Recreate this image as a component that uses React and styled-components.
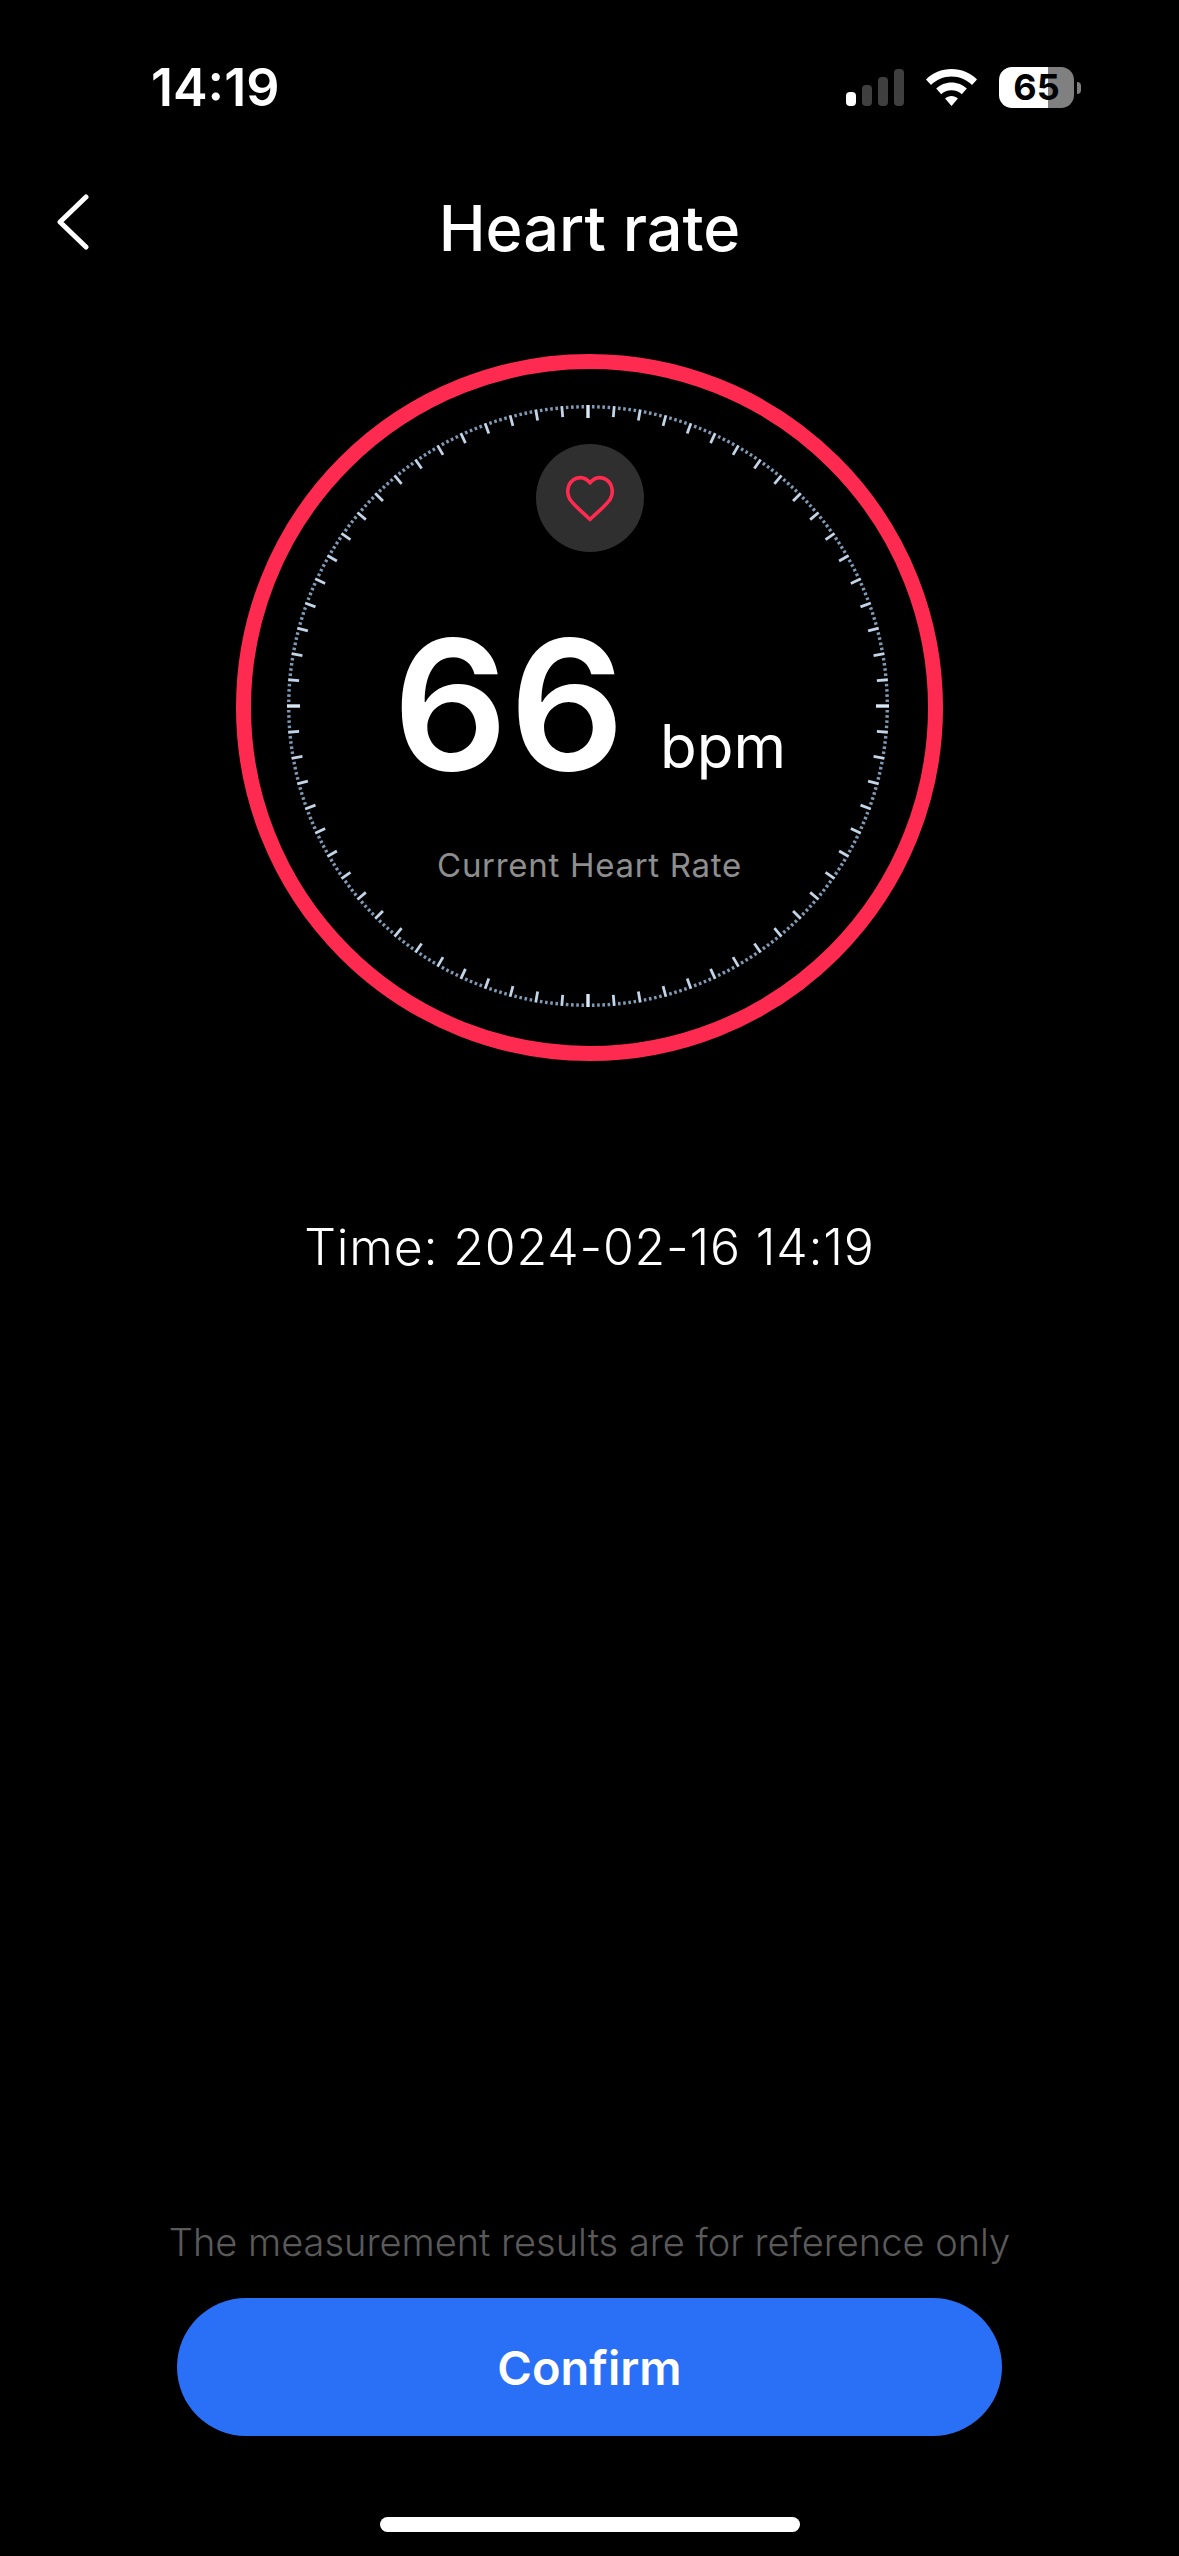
import styled, { createGlobalStyle } from "styled-components";

const ticks = Array.from({ length: 360 }, (_, i) => i);

function tickShape(deg) {
    if (deg % 90 === 0) return { len: 13, width: 3.4, color: "#dbe8f5" };
    if (deg % 5 === 0) return { len: 11, width: 2.8, color: "#c2d5e8" };
    return { len: 3.4, width: 2.6, color: "#7f9ab5" };
}

function Dial() {
    return (
        <DialSvg viewBox="-302 -302 604 604">
            {ticks.map((deg) => {
                const { len, width, color } = tickShape(deg);
                return (
                    <line
                        key={deg}
                        x1="0"
                        y1={-301}
                        x2="0"
                        y2={-301 + len}
                        stroke={color}
                        strokeWidth={width}
                        transform={`rotate(${deg})`}
                    />
                );
            })}
        </DialSvg>
    );
}

function App() {
    return (
        <Screen>
            <GlobalStyle />
            <StatusBar>
                <Clock>14:19</Clock>
                <StatusIcons>
                    <Signal>
                        <Bar $h={14} $on />
                        <Bar $h={21} />
                        <Bar $h={29} />
                        <Bar $h={37} />
                    </Signal>
                    <svg width="51" height="37" viewBox="0 0 51 37">
                        <path
                            d="M25.5 0C35.5 0 44.3 3.9 51 10.4L46 16C40.6 10.8 33.4 7.6 25.5 7.6S10.4 10.8 5 16L0 10.4C6.7 3.9 15.5 0 25.5 0Z"
                            fill="#fff"
                        />
                        <path
                            d="M25.5 13.5C31.4 13.5 36.8 15.8 40.8 19.6L35.8 25.2C33.1 22.7 29.5 21.2 25.5 21.2S17.9 22.7 15.2 25.2L10.2 19.6C14.2 15.8 19.6 13.5 25.5 13.5Z"
                            fill="#fff"
                        />
                        <path
                            d="M25.5 27C28 27 30.2 27.9 31.9 29.5L25.5 37L19.1 29.5C20.8 27.9 23 27 25.5 27Z"
                            fill="#fff"
                        />
                    </svg>
                    <Battery>
                        <BatteryCell>
                            <BatteryLevel>65</BatteryLevel>
                        </BatteryCell>
                        <BatteryCap />
                    </Battery>
                </StatusIcons>
            </StatusBar>

            <NavBar>
                <BackButton>
                    <svg width="34" height="56" viewBox="0 0 34 56">
                        <path
                            d="M30 3L4 28L30 53"
                            fill="none"
                            stroke="#fff"
                            strokeWidth="5"
                            strokeLinecap="round"
                            strokeLinejoin="round"
                        />
                    </svg>
                </BackButton>
                <Title>Heart rate</Title>
                <span />
            </NavBar>

            <Gauge>
                <Dial />
                <HeartBadge>
                    <svg width="52" height="49" viewBox="-1.5 -1.5 52 49">
                        <path
                            d="M24.5 44C18 37.5 9 30.5 4.5 24C0.5 17.5 1.5 6.5 11 2.8C16.5 1 21.5 3.5 24.5 7.5C27.5 3.5 32.5 1 38 2.8C47.5 6.5 48.5 17.5 44.5 24C40 30.5 31 37.5 24.5 44Z"
                            fill="none"
                            stroke="#fe2a50"
                            strokeWidth="3.6"
                            strokeLinejoin="round"
                        />
                    </svg>
                </HeartBadge>
                <Reading>
                    <Value>66</Value>
                    <Unit>bpm</Unit>
                </Reading>
                <Caption>Current Heart Rate</Caption>
            </Gauge>

            <TimeStamp>Time: 2024-02-16 14:19</TimeStamp>

            <Footer>
                <Note>The measurement results are for reference only</Note>
                <ConfirmButton>Confirm</ConfirmButton>
                <HomeBar />
            </Footer>
        </Screen>
    );
}

const GlobalStyle = createGlobalStyle`
    html, body {
        margin: 0;
        padding: 0;
        background: #000;
    }
`;

const Screen = styled.div`
    width: 1179px;
    height: 2556px;
    display: flex;
    flex-direction: column;
    background: #000;
    color: #fff;
    font-family: Inter, "Liberation Sans", sans-serif;
    overflow: hidden;
`;

const StatusBar = styled.div`
    height: 41px;
    margin-top: 67px;
    padding: 0 98px 0 151px;
    display: flex;
    align-items: center;
    justify-content: space-between;
`;

const Clock = styled.div`
    font-size: 52px;
    font-weight: 600;
    line-height: 41px;
`;

const StatusIcons = styled.div`
    display: flex;
    align-items: center;
    gap: 22px;
`;

const Signal = styled.div`
    display: flex;
    align-items: flex-end;
    gap: 6px;
    height: 37px;
`;

const Bar = styled.div`
    width: 10px;
    height: ${(p) => p.$h}px;
    border-radius: 4px;
    background: ${(p) => (p.$on ? "#fff" : "#3f3f3f")};
`;

const Battery = styled.div`
    display: flex;
    align-items: center;
    gap: 3px;
`;

const BatteryCell = styled.div`
    width: 75px;
    height: 41px;
    border-radius: 13px;
    display: flex;
    align-items: center;
    justify-content: center;
    background: linear-gradient(to right, #fff 65%, #808080 65%);
`;

const BatteryLevel = styled.span`
    font-size: 36px;
    font-weight: 700;
    color: #000;
    line-height: 41px;
`;

const BatteryCap = styled.div`
    width: 4px;
    height: 12px;
    border-radius: 0 6px 6px 0;
    background: #808080;
`;

const NavBar = styled.div`
    margin-top: 79px;
    height: 70px;
    padding: 0 56px;
    display: grid;
    grid-template-columns: 1fr auto 1fr;
    grid-template-rows: 70px;
    align-items: center;
`;

const BackButton = styled.div`
    display: flex;
    align-items: center;
`;

const Title = styled.div`
    height: 70px;
    font-size: 63px;
    font-weight: 500;
    line-height: 82px;
`;

const Gauge = styled.div`
    position: relative;
    box-sizing: border-box;
    width: 707px;
    height: 707px;
    margin: 97px auto 0;
    border: 15px solid #fe2a50;
    border-radius: 50%;
    display: flex;
    flex-direction: column;
    align-items: center;
`;

const DialSvg = styled.svg`
    position: absolute;
    left: 35px;
    top: 35px;
    width: 604px;
    height: 604px;
`;

const HeartBadge = styled.div`
    width: 108px;
    height: 108px;
    margin-top: 75px;
    border-radius: 50%;
    background: #2f2f2f;
    display: flex;
    align-items: center;
    justify-content: center;
`;

const Reading = styled.div`
    margin-top: 63px;
    display: flex;
    align-items: flex-end;
    gap: 34px;
`;

const Value = styled.div`
    font-size: 180px;
    font-weight: 600;
    line-height: 180px;
    letter-spacing: 1.5px;
`;

const Unit = styled.div`
    font-size: 60px;
    font-weight: 400;
    line-height: 98px;
`;

const Caption = styled.div`
    margin-top: 50px;
    font-size: 33px;
    color: #8e8e8e;
    letter-spacing: 0.7px;
`;

const TimeStamp = styled.div`
    margin-top: 156px;
    text-align: center;
    font-size: 50px;
    font-weight: 300;
    letter-spacing: 0.8px;
`;

const Footer = styled.div`
    margin-top: auto;
    display: flex;
    flex-direction: column;
    align-items: center;
`;

const Note = styled.div`
    font-size: 38px;
    font-weight: 300;
    color: #5a5a5a;
`;

const ConfirmButton = styled.div`
    width: 825px;
    height: 138px;
    margin-top: 33px;
    border-radius: 69px;
    background: #2970f6;
    display: flex;
    align-items: center;
    justify-content: center;
    font-size: 47px;
    font-weight: 600;
`;

const HomeBar = styled.div`
    width: 420px;
    height: 15px;
    margin: 81px 0 24px;
    border-radius: 8px;
    background: #fff;
`;

export default App;
